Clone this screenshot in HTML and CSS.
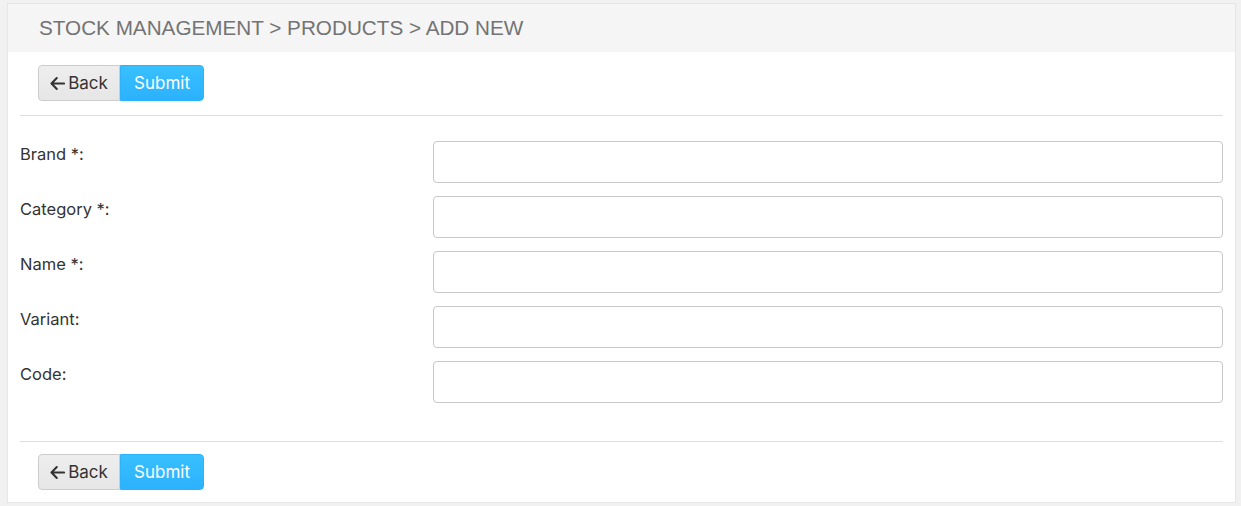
FILE: index.html
```html
<!DOCTYPE html>
<html lang="en">
<head>
    <meta charset="UTF-8">
    <title>Add New Product</title>
    <link rel="stylesheet" href="styles.css">
</head>
<body>
    <div class="panel">
        <div class="panel-heading">STOCK MANAGEMENT &gt; PRODUCTS &gt; ADD NEW</div>

        <div class="panel-body">
            <!-- Barra de acciones superior -->
            <div class="toolbar">
                <div class="btn-group">
                    <button class="btn btn-back">
                        <svg class="icon" viewBox="0 0 16 16" width="15" height="15"><path d="M7.2 2.2 1.6 8l5.6 5.8M2 8h13" fill="none" stroke="currentColor" stroke-width="2.2" stroke-linecap="round" stroke-linejoin="round"/></svg>Back
                    </button>
                    <button class="btn btn-submit">Submit</button>
                </div>
            </div>

            <form class="product-form">
                <label class="form-label">Brand *:</label>
                <input type="text" class="form-input">
                <label class="form-label">Category *:</label>
                <input type="text" class="form-input">
                <label class="form-label">Name *:</label>
                <input type="text" class="form-input">
                <label class="form-label">Variant:</label>
                <input type="text" class="form-input">
                <label class="form-label">Code:</label>
                <input type="text" class="form-input">
            </form>

            <!-- Barra de acciones inferior -->
            <div class="toolbar toolbar-bottom">
                <div class="btn-group">
                    <button class="btn btn-back">
                        <svg class="icon" viewBox="0 0 16 16" width="15" height="15"><path d="M7.2 2.2 1.6 8l5.6 5.8M2 8h13" fill="none" stroke="currentColor" stroke-width="2.2" stroke-linecap="round" stroke-linejoin="round"/></svg>Back
                    </button>
                    <button class="btn btn-submit">Submit</button>
                </div>
            </div>
        </div>
    </div>
</body>
</html>
```

FILE: styles.css
```css
/* General */
body {
    font-family: "Inter", "Liberation Sans", sans-serif;
    background-color: #f1f1f1;
    color: #333;
    margin: 0;
    padding: 3px 5px 3px 7px;
}

/* Panel principal */
.panel {
    background-color: #fff;
    border: 1px solid #e6e6e6;
    min-height: 498px;
    box-sizing: border-box;
}

.panel-heading {
    background-color: #f5f5f5;
    color: #737373;
    font-family: "Liberation Sans", Arial, sans-serif;
    font-size: 20.7px;
    height: 48px;
    line-height: 48px;
    padding-left: 31px;
}

.panel-body {
    padding: 0 12px;
}

/* Botones */
.toolbar {
    padding: 13px 0 14px 18px;
    border-bottom: 1px solid #dedede;
}

.toolbar-bottom {
    border-bottom: none;
    border-top: 1px solid #dedede;
    padding-top: 12px;
    padding-bottom: 12px;
}

.btn-group {
    display: flex;
}

.btn {
    font-family: "Inter", "Liberation Sans", sans-serif;
    font-size: 17px;
    height: 36px;
    padding: 0;
    border: 1px solid transparent;
    cursor: pointer;
    display: flex;
    align-items: center;
    justify-content: center;
}

.btn-back {
    background: linear-gradient(#eeeeee, #e6e6e6);
    border-color: #cccccc;
    color: #333;
    border-radius: 4px 0 0 4px;
    width: 82px;
}

.btn-submit {
    background: linear-gradient(#38c0ff, #2cb1fc);
    border-color: #2cb3fd;
    color: #fff;
    border-radius: 0 4px 4px 0;
    width: 84px;
}

.icon {
    flex-shrink: 0;
    margin-right: 3px;
}

/* Formulario */
.product-form {
    display: grid;
    grid-template-columns: 413px 1fr;
    row-gap: 13px;
    padding: 25px 0 38px;
}

.form-label {
    font-size: 16.5px;
    padding-top: 3px;
}

.form-input {
    height: 42px;
    border: 1px solid #c8c8c8;
    border-radius: 4px;
    box-sizing: border-box;
}
```
